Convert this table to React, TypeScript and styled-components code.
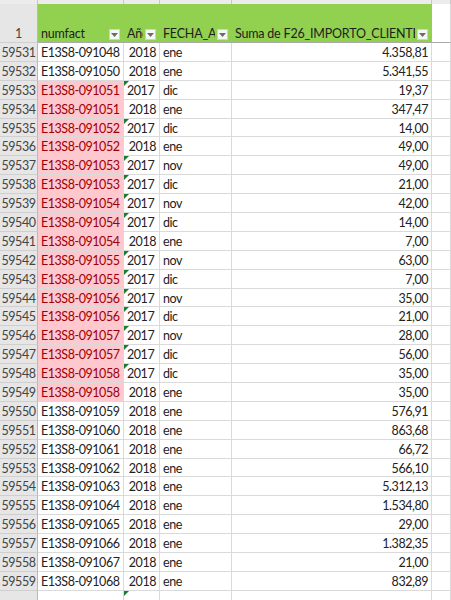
import styled, { createGlobalStyle, css } from "styled-components";

type Row = {
  n: number;
  fact: string;
  year: string;
  month: string;
  amount: string;
  dup?: boolean;
};

const rows: Row[] = [
  { n: 59531, fact: "E13S8-091048", year: "2018", month: "ene", amount: "4.358,81" },
  { n: 59532, fact: "E13S8-091050", year: "2018", month: "ene", amount: "5.341,55" },
  { n: 59533, fact: "E13S8-091051", year: "2017", month: "dic", amount: "19,37", dup: true },
  { n: 59534, fact: "E13S8-091051", year: "2018", month: "ene", amount: "347,47", dup: true },
  { n: 59535, fact: "E13S8-091052", year: "2017", month: "dic", amount: "14,00", dup: true },
  { n: 59536, fact: "E13S8-091052", year: "2018", month: "ene", amount: "49,00", dup: true },
  { n: 59537, fact: "E13S8-091053", year: "2017", month: "nov", amount: "49,00", dup: true },
  { n: 59538, fact: "E13S8-091053", year: "2017", month: "dic", amount: "21,00", dup: true },
  { n: 59539, fact: "E13S8-091054", year: "2017", month: "nov", amount: "42,00", dup: true },
  { n: 59540, fact: "E13S8-091054", year: "2017", month: "dic", amount: "14,00", dup: true },
  { n: 59541, fact: "E13S8-091054", year: "2018", month: "ene", amount: "7,00", dup: true },
  { n: 59542, fact: "E13S8-091055", year: "2017", month: "nov", amount: "63,00", dup: true },
  { n: 59543, fact: "E13S8-091055", year: "2017", month: "dic", amount: "7,00", dup: true },
  { n: 59544, fact: "E13S8-091056", year: "2017", month: "nov", amount: "35,00", dup: true },
  { n: 59545, fact: "E13S8-091056", year: "2017", month: "dic", amount: "21,00", dup: true },
  { n: 59546, fact: "E13S8-091057", year: "2017", month: "nov", amount: "28,00", dup: true },
  { n: 59547, fact: "E13S8-091057", year: "2017", month: "dic", amount: "56,00", dup: true },
  { n: 59548, fact: "E13S8-091058", year: "2017", month: "dic", amount: "35,00", dup: true },
  { n: 59549, fact: "E13S8-091058", year: "2018", month: "ene", amount: "35,00", dup: true },
  { n: 59550, fact: "E13S8-091059", year: "2018", month: "ene", amount: "576,91" },
  { n: 59551, fact: "E13S8-091060", year: "2018", month: "ene", amount: "863,68" },
  { n: 59552, fact: "E13S8-091061", year: "2018", month: "ene", amount: "66,72" },
  { n: 59553, fact: "E13S8-091062", year: "2018", month: "ene", amount: "566,10" },
  { n: 59554, fact: "E13S8-091063", year: "2018", month: "ene", amount: "5.312,13" },
  { n: 59555, fact: "E13S8-091064", year: "2018", month: "ene", amount: "1.534,80" },
  { n: 59556, fact: "E13S8-091065", year: "2018", month: "ene", amount: "29,00" },
  { n: 59557, fact: "E13S8-091066", year: "2018", month: "ene", amount: "1.382,35" },
  { n: 59558, fact: "E13S8-091067", year: "2018", month: "ene", amount: "21,00" },
  { n: 59559, fact: "E13S8-091068", year: "2018", month: "ene", amount: "832,89" },
];

const headers = ["numfact", "Año", "FECHA_A", "Suma de F26_IMPORTO_CLIENTE"];

const GlobalStyle = createGlobalStyle`
  html, body {
    margin: 0;
    padding: 0;
    background: #fff;
    overflow: hidden;
  }
  body {
    font-family: Lato, "Liberation Sans", sans-serif;
    font-size: 12.5px;
    letter-spacing: -0.45px;
    color: #222;
  }
`;

const Sheet = styled.div`
  width: 451px;
  height: 600px;
  overflow: hidden;
`;

const Line = styled.div<{ $h: number }>`
  display: grid;
  grid-template-columns: 38px 86px 36px 72px 200px 1fr;
  height: ${(p) => p.$h}px;
`;

const gridCell = css`
  box-sizing: border-box;
  border-right: 1px solid #dadada;
  border-bottom: 1px solid #dadada;
  overflow: hidden;
  white-space: nowrap;
`;

const ColLetter = styled.div`
  ${gridCell};
  background: #ececec;
  border-color: #c8c8c8;
  border-bottom: none;
`;

const RowNum = styled.div<{ $bottom?: boolean }>`
  ${gridCell};
  background: #e6e6e6;
  border-right-color: #b9b9b9;
  border-bottom-color: #cfcfcf;
  color: #444;
  display: flex;
  justify-content: center;
  align-items: ${(p) => (p.$bottom ? "flex-end" : "center")};
  padding: ${(p) => (p.$bottom ? "0 0 1px 0" : "1px 0 0 0")};
`;

const HeadCell = styled.div<{ $blank?: boolean }>`
  ${gridCell};
  background: ${(p) => (p.$blank ? "#fff" : "#92d050")};
  border-right-color: ${(p) => (p.$blank ? "#dadada" : "#92d050")};
  border-bottom-color: #a9a9a9;
  display: flex;
  align-items: flex-end;
  gap: 2px;
  padding: 0 3px 1px 3px;
  color: #1e1e1e;
`;

const HeadLabel = styled.span`
  flex: 1;
  min-width: 0;
  overflow: hidden;
  white-space: nowrap;
  line-height: 15px;
  letter-spacing: -0.2px;
`;

const FilterButton = styled.span`
  flex: none;
  width: 11px;
  height: 11px;
  margin-bottom: 1px;
  box-sizing: border-box;
  background: #f7f7f7;
  border: 1px solid #d0d0d0;
  display: flex;
  align-items: center;
  justify-content: center;
`;

const Cell = styled.div<{ $align?: "left" | "right"; $dup?: boolean; $flag?: boolean }>`
  ${gridCell};
  position: relative;
  display: flex;
  align-items: center;
  justify-content: ${(p) => (p.$align === "right" ? "flex-end" : "flex-start")};
  padding: 1px 3px 0 3px;
  background: ${(p) => (p.$dup ? "#ffc7ce" : "#fff")};
  color: ${(p) => (p.$dup ? "#9c0006" : "#222")};
  ${(p) =>
    p.$flag &&
    css`
      &::before {
        content: "";
        position: absolute;
        left: 0;
        top: 0;
        border-top: 5px solid #1e7b34;
        border-right: 5px solid transparent;
      }
    `}
`;

const Arrow = () => (
  <svg width="7" height="4" viewBox="0 0 7 4">
    <path d="M0 0h7L3.5 4z" fill="#6b6b6b" />
  </svg>
);

export default function App() {
  return (
    <Sheet>
      <GlobalStyle />
      <Line $h={4}>
        {Array.from({ length: 6 }).map((_, i) => (
          <ColLetter key={i} />
        ))}
      </Line>
      <Line $h={39}>
        <RowNum $bottom>1</RowNum>
        {headers.map((h) => (
          <HeadCell key={h}>
            <HeadLabel>{h}</HeadLabel>
            <FilterButton>
              <Arrow />
            </FilterButton>
          </HeadCell>
        ))}
        <HeadCell $blank />
      </Line>
      {rows.map((r) => {
        const asText = r.year === "2017";
        return (
          <Line key={r.n} $h={18.9}>
            <RowNum>{r.n}</RowNum>
            <Cell $dup={r.dup}>{r.fact}</Cell>
            <Cell $align={asText ? "left" : "right"} $flag={asText}>
              {r.year}
            </Cell>
            <Cell>{r.month}</Cell>
            <Cell $align="right">{r.amount}</Cell>
            <Cell />
          </Line>
        );
      })}
      <Line $h={20}>
        <RowNum />
        <Cell />
        <Cell $flag />
        <Cell />
        <Cell />
        <Cell />
      </Line>
    </Sheet>
  );
}
